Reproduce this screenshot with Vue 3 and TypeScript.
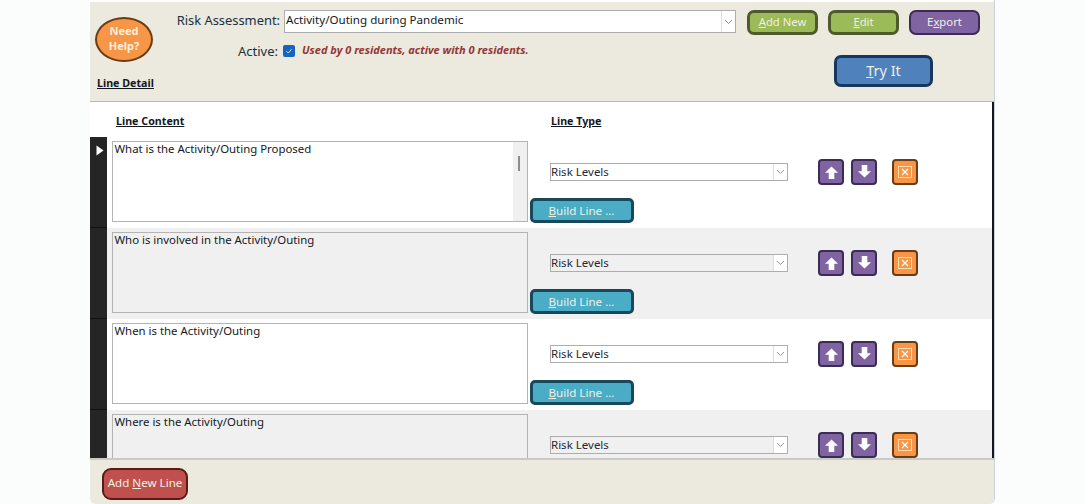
<script setup lang="ts">
interface Line { text: string; scroll?: boolean }
const lines: Line[] = [
  { text: 'What is the Activity/Outing Proposed', scroll: true },
  { text: 'Who is involved in the Activity/Outing' },
  { text: 'When is the Activity/Outing' },
  { text: 'Where is the Activity/Outing' },
]
</script>

<template>
  <div class="page">
    <div class="window">
      <header class="head">
        <div class="head-left">
          <button class="help">Need<br />Help?</button>
          <div class="section"><span>Line Detail</span></div>
        </div>
        <div class="head-main">
          <div class="top-row">
            <label class="lbl-risk">Risk Assessment:</label>
            <div class="combo main-combo">
              <span class="combo-text">Activity/Outing during Pandemic</span>
              <span class="combo-arrow">
                <svg width="9" height="6" viewBox="0 0 9 6"><path d="M1 1l3.5 3.5L8 1" fill="none" stroke="#8a8a8a" stroke-width="1" /></svg>
              </span>
            </div>
            <div class="actions">
              <button class="btn green"><u>A</u>dd New</button>
              <button class="btn green"><u>E</u>dit</button>
              <button class="btn purple">E<u>x</u>port</button>
            </div>
          </div>
          <div class="second-row">
            <label class="lbl-active">Active:</label>
            <span class="check">
              <svg width="8" height="8" viewBox="0 0 8 8"><path d="M1.5 4.2l1.8 1.8L6.6 2.2" fill="none" stroke="#cfe0f3" stroke-width="1" /></svg>
            </span>
            <span class="used">Used by 0 residents, active with 0 residents.</span>
            <button class="btn try"><u>T</u>ry It</button>
          </div>
        </div>
      </header>

      <main class="detail">
        <div class="col-heads">
          <span class="col-content">Line Content</span>
          <span class="col-type">Line Type</span>
        </div>
        <div class="rows">
          <div v-for="(line, i) in lines" :key="line.text" class="row" :class="{ alt: i % 2 === 1 }">
            <div class="selector">
              <svg v-if="i === 0" width="8" height="11" viewBox="0 0 8 11"><path d="M0.5 0.5L7.5 5.5L0.5 10.5Z" fill="#fff" /></svg>
            </div>
            <div class="content-box">
              <span class="content-text">{{ line.text }}</span>
              <span v-if="line.scroll" class="scrollbar"><i></i></span>
            </div>
            <div class="type-col">
              <div class="type-line">
                <div class="combo type-combo">
                  <span class="combo-text">Risk Levels</span>
                  <span class="combo-arrow">
                    <svg width="9" height="6" viewBox="0 0 9 6"><path d="M1 1l3.5 3.5L8 1" fill="none" stroke="#9a9a9a" stroke-width="1" /></svg>
                  </span>
                </div>
                <button class="icon purple" aria-label="Move up">
                  <svg width="13" height="13" viewBox="0 0 13 13"><path d="M6.5 0.5L13 6.8H9.3V13H3.7V6.8H0Z" fill="#fff" /></svg>
                </button>
                <button class="icon purple down" aria-label="Move down">
                  <svg width="13" height="13" viewBox="0 0 13 13"><path d="M6.5 12.5L13 6.2H9.3V0H3.7V6.2H0Z" fill="#fff" /></svg>
                </button>
                <button class="icon orange" aria-label="Delete">
                  <svg width="14" height="12" viewBox="0 0 14 12"><rect x="0.5" y="0.5" width="13" height="11" fill="none" stroke="#ffd9b0" /><path d="M4 3l6 6M10 3l-6 6" stroke="#fff" stroke-width="1.2" /></svg>
                </button>
              </div>
              <button v-if="i < 3" class="btn build"><u>B</u>uild Line ...</button>
            </div>
          </div>
        </div>
      </main>

      <footer class="foot">
        <button class="btn red">Add <u>N</u>ew Line</button>
      </footer>
    </div>
  </div>
</template>

<style>
html, body { margin: 0; background: #fbfcfc; }
</style>

<style scoped>
* { box-sizing: border-box; }
.page {
  width: 1085px;
  height: 504px;
  overflow: hidden;
  padding-left: 90px;
  font-family: "Noto Sans", "Open Sans", sans-serif;
  color: #1f2a36;
}
.window {
  width: 905px;
  height: 504px;
  display: flex;
  flex-direction: column;
  background: #fff;
  border-right: 1px solid #c9d3d8;
  border-bottom-left-radius: 6px;
  border-bottom-right-radius: 6px;
  overflow: hidden;
}
.head {
  height: 100px;
  flex: none;
  margin-top: 2px;
  display: flex;
  padding-left: 6px;
  background: #ece9df;
  border-bottom: 1px solid #b9b9b5;
}
.head-left { width: 64px; flex: none; padding-top: 15px; }
.help {
  width: 58px;
  height: 45px;
  display: block;
  padding: 0 0 3px;
  margin-left: -1px;
  border: 2.5px solid #6b3d17;
  border-radius: 50%;
  background: #f79646;
  color: #fdeedd;
  font: 700 11px/15px "Noto Sans", sans-serif;
}
.section {
  margin: 14px 0 0 1px;
  white-space: nowrap;
  font-size: 10.7px;
  line-height: 15px;
  font-weight: 700;
  color: #14181d;
  text-decoration: underline;
}
.head-main { flex: 1; padding-top: 8px; }
.top-row { display: flex; align-items: flex-start; }
.lbl-risk {
  width: 120px;
  flex: none;
  text-align: right;
  font-size: 12.9px;
  line-height: 21px;
  white-space: nowrap;
  color: #22303c;
}
.combo {
  display: flex;
  align-items: stretch;
  background: #fff;
  border: 1px solid #adadad;
  font-size: 11.5px;
}
.main-combo {
  width: 452px;
  height: 23px;
  margin-left: 4px;
  font-size: 11.6px;
  color: #14181d;
}
.combo-text { flex: 1; padding-left: 0; line-height: 16px; white-space: nowrap; }
.main-combo .combo-text { line-height: 17px; padding-left: 1px; }
.combo-arrow {
  width: 14px;
  flex: none;
  display: flex;
  align-items: center;
  justify-content: center;
  background: #fff;
  border-left: 1px solid #dedede;
}
.actions { display: flex; gap: 10px; margin-left: 11px; }
.btn {
  padding: 0;
  font-family: "Noto Sans", sans-serif;
  color: #f0f0e2;
  white-space: nowrap;
}
.actions .btn {
  width: 71px;
  height: 25px;
  border-radius: 7px;
  font-size: 11.3px;
  padding-bottom: 3px;
}
.green { background: #9bbb59; border: 3px solid #4f5a2c; }
.purple { background: #8064a2; border: 2.5px solid #3a2c55; }
.second-row { display: flex; align-items: flex-start; }
.lbl-active {
  width: 118px;
  flex: none;
  margin-top: 7px;
  text-align: right;
  font-size: 13px;
  line-height: 19px;
  color: #22303c;
}
.check {
  width: 12px;
  height: 12px;
  flex: none;
  margin: 10px 0 0 5px;
  display: flex;
  align-items: center;
  justify-content: center;
  border-radius: 2px;
  background: #1565c0;
}
.used {
  width: 533px;
  flex: none;
  margin: 7px 0 0 7px;
  font-size: 11px;
  line-height: 16px;
  font-weight: 700;
  font-style: italic;
  color: #953735;
  white-space: nowrap;
}
.try {
  width: 99px;
  height: 32px;
  margin-top: 20px;
  margin-left: -1px;
  border: 3px solid #17375e;
  border-radius: 7px;
  background: #4f81bd;
  font-size: 14.5px;
  padding-bottom: 2px;
}
.detail {
  flex: 1;
  min-height: 0;
  overflow: hidden;
  border-right: 2px solid #16181c;
  background: #fff;
}
.col-heads {
  height: 35px;
  display: flex;
  padding: 12px 0 0 26px;
  font-size: 10.7px;
  line-height: 15px;
  font-weight: 700;
  color: #14181d;
  text-decoration: underline;
}
.col-content { width: 435px; }
.rows { display: flex; flex-direction: column; }
.row { height: 91px; flex: none; display: flex; background: #fff; }
.row.alt { background: #f0f0f0; }
.selector {
  width: 17px;
  flex: none;
  padding: 2px 0 0 6px;
  background: #252525;
  border-bottom: 1px solid #111;
}
.content-box {
  position: relative;
  width: 416px;
  height: 81px;
  flex: none;
  margin: 4px 0 0 5px;
  padding: 0 1.5px;
  border: 1px solid #b4b4b4;
  font-size: 11.4px;
  line-height: 14px;
  color: #14181d;
}
.scrollbar {
  position: absolute;
  top: 0;
  right: 0;
  bottom: 0;
  width: 14px;
  background: #f0f0f0;
}
.scrollbar i {
  position: absolute;
  top: 14px;
  left: 5px;
  width: 2px;
  height: 15px;
  background: #8d8d8d;
}
.type-col { width: 400px; flex: none; margin-left: 1px; }
.type-line { display: flex; align-items: center; height: 26px; margin: 22px 0 0 21px; }
.type-combo { width: 238px; height: 18px; background: transparent; }
.alt .type-combo { background: #f0f0f0; }
.type-combo .combo-text { padding-left: 0; }
.icon {
  width: 26px;
  height: 26px;
  display: flex;
  align-items: center;
  justify-content: center;
  padding: 0;
  border-radius: 4px;
}
.type-line .icon.purple { margin-left: 30px; }
.type-line .icon.down { margin-left: 7px; padding-bottom: 2px; }
.orange {
  margin-left: 15px;
  background: #f79646;
  border: 2.5px solid #6b3d17;
}
.build {
  display: block;
  width: 104px;
  height: 25px;
  margin: 13px 0 0 0.5px;
  border: 3px solid #17495a;
  border-radius: 5px;
  background: #4bacc6;
  font-size: 11.6px;
  padding-bottom: 1px;
}
.foot {
  height: 46px;
  flex: none;
  padding: 8px 0 0 12px;
  background: #ece9df;
  border-top: 2px solid #c9c9c5;
}
.red {
  display: block;
  width: 86px;
  height: 32px;
  border: 2.5px solid #5a1a18;
  border-radius: 9px;
  background: #c0504d;
  font-size: 11.6px;
  padding-bottom: 3px;
}
</style>
